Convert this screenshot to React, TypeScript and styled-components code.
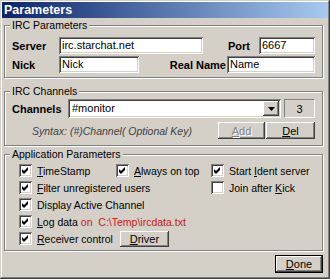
import React from "react";
import styled, { createGlobalStyle, css } from "styled-components";

const Global = createGlobalStyle`
  html, body { margin: 0; padding: 0; background: #d4d0c8; }
  body { font-family: "Liberation Sans", Arial, sans-serif; font-size: 10.5px; color: #000; }
  * { box-sizing: border-box; }
`;

const raised = css`
  box-shadow: inset -1px -1px 0 #404040, inset 1px 1px 0 #fff,
    inset -2px -2px 0 #808080, inset 2px 2px 0 #d4d0c8;
`;

const sunken = css`
  box-shadow: inset 1px 1px 0 #808080, inset -1px -1px 0 #fff,
    inset 2px 2px 0 #404040, inset -2px -2px 0 #d4d0c8;
`;

const Window = styled.div`
  width: 330px;
  height: 279px;
  padding: 2px;
  background: #d4d0c8;
  display: flex;
  flex-direction: column;
  box-shadow: inset -1px -1px 0 #404040, inset 1px 1px 0 #d4d0c8,
    inset -2px -2px 0 #808080, inset 2px 2px 0 #fff;
`;

const TitleBar = styled.div`
  height: 16px;
  padding-left: 2px;
  display: flex;
  align-items: center;
  background: linear-gradient(to right, #0a246a, #a6caf0);
  color: #fff;
  font-weight: bold;
  font-size: 12.5px;
`;

const Body = styled.div`
  padding: 0 5px 0 2px;
  display: flex;
  flex-direction: column;
`;

const Group = styled.div<{ $top: number; $padBottom: number }>`
  margin-top: ${(p) => p.$top}px;
  border: 1px solid #808080;
  box-shadow: 1px 1px 0 #fff, inset 1px 1px 0 #fff;
  padding: 0 7px ${(p) => p.$padBottom}px 7px;
  display: flex;
  flex-direction: column;
`;

const Legend = styled.span`
  display: block;
  width: fit-content;
  margin: -7px 0 0 -2px;
  padding: 0 2px;
  height: 12px;
  line-height: 12px;
  background: #d4d0c8;
`;

const Row = styled.div<{ $top: number; $h: number }>`
  display: flex;
  align-items: center;
  margin-top: ${(p) => p.$top}px;
  height: ${(p) => p.$h}px;
`;

const Label = styled.span<{ $w: number; $right?: boolean; $pr?: number }>`
  width: ${(p) => p.$w}px;
  flex: none;
  font-weight: bold;
  font-size: 11px;
  text-align: ${(p) => (p.$right ? "right" : "left")};
  padding-right: ${(p) => p.$pr ?? 0}px;
`;

const Field = styled.div<{ $w: number }>`
  width: ${(p) => p.$w}px;
  height: 17px;
  flex: none;
  background: #fff;
  ${sunken};
  padding: 2px 3px 0 3px;
  line-height: 13px;
  font-size: 11px;
  white-space: nowrap;
  overflow: hidden;
`;

const Combo = styled.div`
  width: 213px;
  height: 19px;
  flex: none;
  background: #fff;
  ${sunken};
  padding: 2px;
  display: flex;
`;

const ComboText = styled.span`
  flex: 1;
  padding: 1px 0 0 2px;
  line-height: 13px;
  font-size: 11px;
`;

const ComboButton = styled.div`
  width: 16px;
  height: 15px;
  background: #d4d0c8;
  ${raised};
  display: flex;
  align-items: center;
  justify-content: center;
`;

const CountBox = styled.div`
  width: 31px;
  height: 19px;
  margin-left: 3px;
  flex: none;
  border: 1px solid;
  border-color: #808080 #fff #fff #808080;
  display: flex;
  align-items: center;
  justify-content: center;
  font-size: 11px;
`;

const Syntax = styled.span`
  flex: 1;
  padding-left: 20px;
  font-style: italic;
  color: #404040;
  white-space: nowrap;
`;

const Button = styled.div<{ $w: number; $h?: number; $disabled?: boolean; $default?: boolean; $ml?: number }>`
  width: ${(p) => p.$w}px;
  height: ${(p) => p.$h ?? 17}px;
  margin-left: ${(p) => p.$ml ?? 0}px;
  flex: none;
  background: #d4d0c8;
  display: flex;
  align-items: center;
  justify-content: center;
  font-size: 11px;
  ${(p) =>
    p.$default
      ? css`
          border: 1px solid #000;
          box-shadow: inset -1px -1px 0 #404040, inset 1px 1px 0 #fff,
            inset -2px -2px 0 #808080;
        `
      : raised};
  ${(p) =>
    p.$disabled &&
    css`
      color: #808080;
      text-shadow: 1px 1px 0 #fff;
    `}
`;

const Grid = styled.div`
  display: grid;
  grid-template-columns: 97px 95px 1fr;
  grid-auto-rows: 17px;
  margin-top: 2px;
  padding-left: 7px;
`;

const Check = styled.div<{ $span?: number }>`
  display: flex;
  align-items: center;
  gap: 5px;
  grid-column: ${(p) => (p.$span ? `span ${p.$span}` : "auto")};
  white-space: nowrap;
`;

const Box = styled.span`
  width: 13px;
  height: 13px;
  flex: none;
  background: #fff;
  ${sunken};
  display: flex;
  align-items: center;
  justify-content: center;
`;

const Red = styled.span`
  color: #c41a12;
`;

const Footer = styled.div`
  display: flex;
  justify-content: flex-end;
  margin-top: 4px;
`;

const CheckBox = ({ checked }: { checked: boolean }) => (
  <Box>
    {checked && (
      <svg width="9" height="9" viewBox="0 0 9 9">
        <polygon points="1,3 3,5 7,1 7,4 3,8 1,6" fill="#000" />
      </svg>
    )}
  </Box>
);

export default function App() {
  return (
    <>
      <Global />
      <Window>
        <TitleBar>Parameters</TitleBar>
        <Body>
          <Group $top={7} $padBottom={4}>
            <Legend>IRC Parameters</Legend>
            <Row $top={6} $h={17}>
              <Label $w={47}>Server</Label>
              <Field $w={144}>irc.starchat.net</Field>
              <Label $w={56} $right $pr={9}>Port</Label>
              <Field $w={56}>6667</Field>
            </Row>
            <Row $top={2} $h={17}>
              <Label $w={47}>Nick</Label>
              <Field $w={80}>Nick</Field>
              <Label $w={88} $right $pr={1}>Real Name</Label>
              <Field $w={88}>Name</Field>
            </Row>
          </Group>
          <Group $top={13} $padBottom={6}>
            <Legend>IRC Channels</Legend>
            <Row $top={2} $h={19}>
              <Label $w={56}>Channels</Label>
              <Combo>
                <ComboText>#monitor</ComboText>
                <ComboButton>
                  <svg width="7" height="4" viewBox="0 0 7 4">
                    <polygon points="0,0 7,0 3.5,4" fill="#000" />
                  </svg>
                </ComboButton>
              </Combo>
              <CountBox>3</CountBox>
            </Row>
            <Row $top={4} $h={17}>
              <Syntax>Syntax: (#)Channel( Optional Key)</Syntax>
              <Button $w={47} $disabled>
                <u>A</u>dd
              </Button>
              <Button $w={49} $ml={1}>
                <u>D</u>el
              </Button>
            </Row>
          </Group>
          <Group $top={8} $padBottom={3}>
            <Legend>Application Parameters</Legend>
            <Grid>
              <Check>
                <CheckBox checked />
                <span>
                  <u>T</u>imeStamp
                </span>
              </Check>
              <Check>
                <CheckBox checked />
                <span>
                  <u>A</u>lways on top
                </span>
              </Check>
              <Check>
                <CheckBox checked />
                <span>
                  Start <u>I</u>dent server
                </span>
              </Check>
              <Check $span={2}>
                <CheckBox checked />
                <span>
                  <u>F</u>ilter unregistered users
                </span>
              </Check>
              <Check>
                <CheckBox checked={false} />
                <span>
                  Join after <u>K</u>ick
                </span>
              </Check>
              <Check $span={3}>
                <CheckBox checked />
                <span>Display Active Channel</span>
              </Check>
              <Check $span={3}>
                <CheckBox checked />
                <span>
                  <u>L</u>og data <Red>on&nbsp;&nbsp;C:\Temp\ircdata.txt</Red>
                </span>
              </Check>
              <Check $span={3}>
                <CheckBox checked />
                <span>
                  <u>R</u>eceiver control
                </span>
                <Button $w={49} $h={16} $ml={2}>
                  <u>D</u>river
                </Button>
              </Check>
            </Grid>
          </Group>
          <Footer>
            <Button $w={48} $h={18} $default>
              <u>D</u>one
            </Button>
          </Footer>
        </Body>
      </Window>
    </>
  );
}
